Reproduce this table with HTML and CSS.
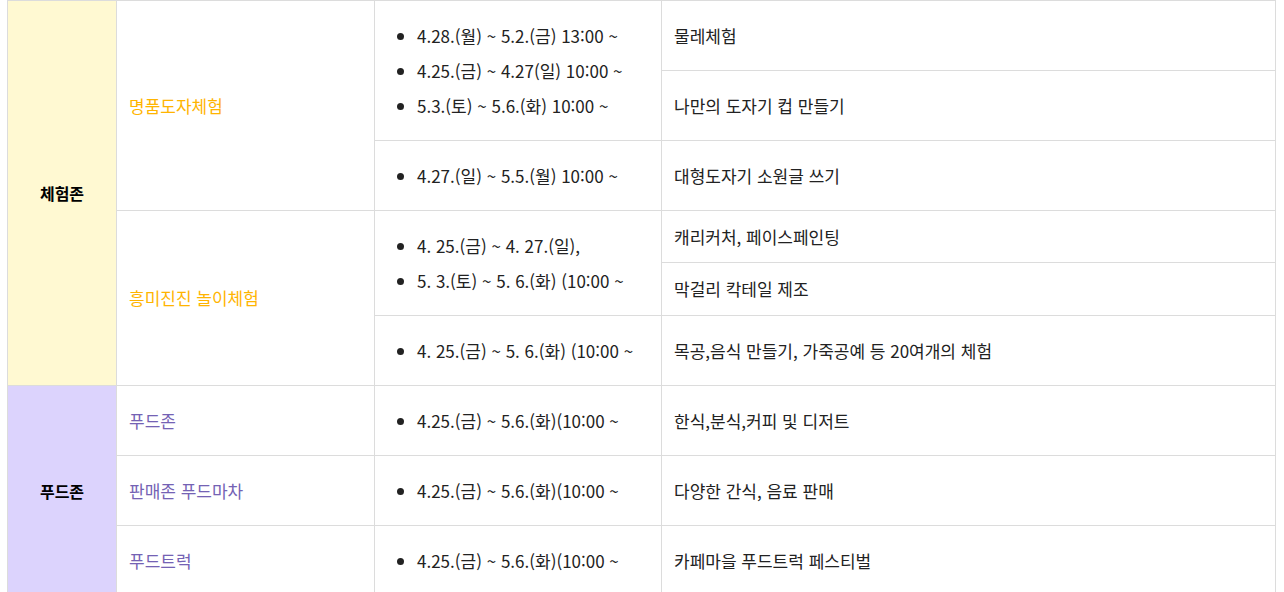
FILE: index.html
```html
<!DOCTYPE html>
<html lang="ko">
<head>
<meta charset="utf-8">
<link rel="stylesheet" href="styles.css">
</head>
<body>
<div class="wrap">
<table class="sched">
  <colgroup>
    <col class="c-zone">
    <col class="c-name">
    <col class="c-date">
    <col class="c-desc">
  </colgroup>
  <tbody>
    <tr class="r70">
      <td class="zone zone-exp" rowspan="6">체험존</td>
      <td class="name name-exp" rowspan="3">명품도자체험</td>
      <td class="date" rowspan="2">
        <ul>
          <li>4.28.(월) ~ 5.2.(금) 13:00 ~</li>
          <li>4.25.(금) ~ 4.27(일) 10:00 ~</li>
          <li>5.3.(토) ~ 5.6.(화) 10:00 ~</li>
        </ul>
      </td>
      <td class="desc">물레체험</td>
    </tr>
    <tr class="r70">
      <td class="desc">나만의 도자기 컵 만들기</td>
    </tr>
    <tr class="r70">
      <td class="date"><ul><li>4.27.(일) ~ 5.5.(월) 10:00 ~</li></ul></td>
      <td class="desc">대형도자기 소원글 쓰기</td>
    </tr>
    <tr class="r52">
      <td class="name name-exp" rowspan="3">흥미진진 놀이체험</td>
      <td class="date narrow" rowspan="2">
        <ul>
          <li>4. 25.(금) ~ 4. 27.(일),</li>
          <li>5. 3.(토) ~ 5. 6.(화) (10:00 ~</li>
        </ul>
      </td>
      <td class="desc">캐리커처, 페이스페인팅</td>
    </tr>
    <tr class="r53">
      <td class="desc">막걸리 칵테일 제조</td>
    </tr>
    <tr class="r70">
      <td class="date narrow"><ul><li>4. 25.(금) ~ 5. 6.(화) (10:00 ~</li></ul></td>
      <td class="desc">목공,음식 만들기, 가죽공예 등 20여개의 체험</td>
    </tr>
    <tr class="r70">
      <td class="zone zone-food" rowspan="3">푸드존</td>
      <td class="name name-food">푸드존</td>
      <td class="date"><ul><li>4.25.(금) ~ 5.6.(화)(10:00 ~</li></ul></td>
      <td class="desc">한식,분식,커피 및 디저트</td>
    </tr>
    <tr class="r70">
      <td class="name name-food">판매존 푸드마차</td>
      <td class="date"><ul><li>4.25.(금) ~ 5.6.(화)(10:00 ~</li></ul></td>
      <td class="desc">다양한 간식, 음료 판매</td>
    </tr>
    <tr class="r70">
      <td class="name name-food">푸드트럭</td>
      <td class="date"><ul><li>4.25.(금) ~ 5.6.(화)(10:00 ~</li></ul></td>
      <td class="desc">카페마을 푸드트럭 페스티벌</td>
    </tr>
  </tbody>
</table>
</div>
</body>
</html>
```

FILE: styles.css
```css
html, body {
  margin: 0;
  padding: 0;
  background: #fff;
}
body {
  font-family: "Noto Sans CJK KR", "Noto Sans", sans-serif;
  font-size: 17px;
  color: #222;
}
.wrap {
  padding-left: 7px;
}
.sched {
  border-collapse: collapse;
  table-layout: fixed;
  width: 1268px;
}
.c-zone { width: 109px; }
.c-name { width: 258px; }
.c-date { width: 287px; }
.c-desc { width: 614px; }
.sched td {
  border: 1px solid #dcdcdc;
  padding: 0 12px;
  vertical-align: middle;
  line-height: 24px;
}
.r70 { height: 70px; }
.r52 { height: 52px; }
.r53 { height: 53px; }
.zone {
  text-align: center;
  font-weight: 700;
  font-size: 16px;
  color: #000;
}
.zone-exp { background: #fff9d2; }
.zone-food { background: #dcd3fd; }
.name-exp { color: #ffb400; }
.name-food { color: #7462b4; }
.date ul {
  margin: 0;
  padding: 0 0 0 30px;
}
.date li {
  line-height: 35px;
}
.desc {
  padding-left: 14px;
}
```
